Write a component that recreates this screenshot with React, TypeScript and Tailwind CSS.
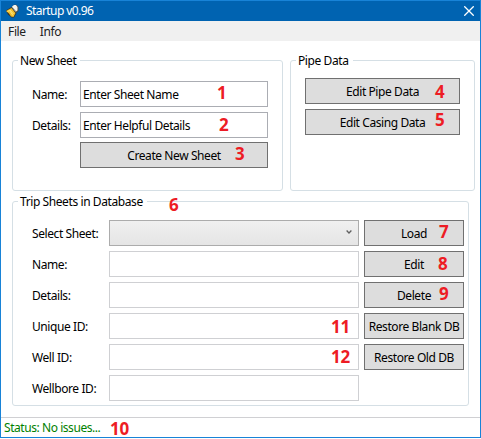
import type { ReactNode } from 'react';

function Mark({ n, className }: { n: number; className: string }) {
  return (
    <span className={`pointer-events-none absolute z-10 text-[17px] leading-[18px] font-bold tracking-[-0.2px] text-[#ed1c24] ${className}`}>
      {n}
    </span>
  );
}

function Group({ title, className, children }: { title: string; className: string; children: ReactNode }) {
  return (
    <section className={`rounded-[3px] border border-[#d5dfe5] ${className}`}>
      <h2 className="-mt-[8px] ml-[5px] h-4 w-fit bg-white pr-[4px] pl-[2px] leading-4">{title}</h2>
      {children}
    </section>
  );
}

function Button({ children, className }: { children: ReactNode; className: string }) {
  return (
    <button className={`flex h-[26px] shrink-0 items-center justify-center border border-[#707070] bg-[#dddddd] pt-[2px] whitespace-nowrap ${className}`}>
      {children}
    </button>
  );
}

function NewSheetField({ label, value }: { label: string; value: string }) {
  return (
    <div className="flex h-[26px] items-center">
      <label className="w-12 pt-[2px]">{label}</label>
      <div className="flex h-[26px] w-[188px] items-center border border-[#abadb3] pt-[2px] pl-[2px]">{value}</div>
    </div>
  );
}

const rows = [
  { label: 'Select Sheet:', action: 'Load', combo: true },
  { label: 'Name:', action: 'Edit' },
  { label: 'Details:', action: 'Delete' },
  { label: 'Unique ID:', action: 'Restore Blank DB' },
  { label: 'Well ID:', action: 'Restore Old DB' },
  { label: 'Wellbore ID:' },
];

export default function App() {
  return (
    <div className="relative h-[439px] w-[481px] bg-white font-['Noto_Sans','Open_Sans',sans-serif] text-[12px] leading-4 tracking-[-0.41px] text-black">
      <div className="flex h-[438px] flex-col border border-[#1883d7]">
        <header className="flex h-5 shrink-0 items-center bg-[#0063b1] pr-[6px] pl-[4px] text-white">
          <svg width="15" height="15" viewBox="0 0 15 15">
            <path d="M1 6.5L6.5 3l5 6-2.500 4.500H6.500L3 10.500z" fill="#3a3526" />
            <path d="M7 2.500L9 .8h2.500L13.500 3v4L11 9z" fill="#4c4c48" />
            <path d="M1 7l5.500-3L10.500 9l-2 4-2.500-.5-2-3z" fill="#efbd2c" />
            <path d="M2.500 7.500l2-1 3.500 5M5 6l3.500 4" fill="none" stroke="#fff08a" strokeWidth=".8" />
            <path d="M7 2.500L9 1h2l1.500 2v3.500L10.500 7.500z" fill="#f4f4ee" />
            <path d="M7 3l4 4.500" fill="none" stroke="#aaa99f" strokeWidth="1" />
          </svg>
          <h1 className="ml-[6px] flex-1 tracking-[-0.58px]">Startup v0.96</h1>
          <svg width="10" height="10" viewBox="0 0 10 10" fill="none" stroke="white" strokeWidth="1.3">
            <path d="M.3.3l9.400 9.400M9.700.3L.3 9.700" />
          </svg>
        </header>
        <nav className="flex h-5 shrink-0 items-center gap-[14px] bg-[#f0f0f0] pt-px pl-[7px] tracking-[-0.35px] text-[#212121]">
          <span>File</span>
          <span>Info</span>
        </nav>
        <main className="flex flex-1 flex-col gap-[10px] pt-[19px] pl-[11px]">
          <div className="flex gap-[7px]">
            <Group title="New Sheet" className="h-[131px] w-[271px]">
              <div className="mt-[12px] ml-[19px] flex flex-col gap-[5px]">
                <NewSheetField label="Name:" value="Enter Sheet Name" />
                <NewSheetField label="Details:" value="Enter Helpful Details" />
                <Button className="-mt-px ml-12 w-[188px]">Create New Sheet</Button>
              </div>
            </Group>
            <Group title="Pipe Data" className="h-[131px] w-[185px]">
              <div className="mt-[9px] ml-[14px] flex flex-col gap-[5px]">
                <Button className="w-[155px]">Edit Pipe Data</Button>
                <Button className="w-[155px]">Edit Casing Data</Button>
              </div>
            </Group>
          </div>
          <Group title="Trip Sheets in Database" className="h-[205px] w-[457px]">
            <div className="mt-[10px] ml-[19px] flex flex-col gap-[5px]">
              {rows.map((row) => (
                <div key={row.label} className="flex h-[26px] items-center">
                  <label className="w-[77px] pt-[2px] whitespace-nowrap">{row.label}</label>
                  {row.combo ? (
                    <div className="flex h-[26px] w-[250px] items-center justify-end border border-[#acacac] bg-linear-to-b from-[#f0f0f0] to-[#e5e5e5] pr-[6px] pb-[2px]">
                      <svg width="6" height="4" viewBox="0 0 6 4" fill="none" stroke="#606060" strokeWidth="1.3">
                        <path d="M.6.5L3 3 5.400.5" />
                      </svg>
                    </div>
                  ) : (
                    <div className="h-[26px] w-[250px] border border-[#cfd0d3]" />
                  )}
                  {row.action && <Button className="ml-[5px] w-[100px]">{row.action}</Button>}
                </div>
              ))}
            </div>
          </Group>
        </main>
        <footer className="h-5 shrink-0 border-t border-[#d0d0d3] pt-[2px] pl-[3px] tracking-[-0.44px] text-[#008000]">Status: No issues...</footer>
      </div>
      <Mark n={1} className="top-[84px] left-[217px]" />
      <Mark n={2} className="top-[116px] left-[219px]" />
      <Mark n={3} className="top-[145px] left-[235px]" />
      <Mark n={4} className="top-[83px] left-[435px]" />
      <Mark n={5} className="top-[111px] left-[435px]" />
      <Mark n={6} className="top-[196px] left-[169px]" />
      <Mark n={7} className="top-[223px] left-[439px]" />
      <Mark n={8} className="top-[255px] left-[438px]" />
      <Mark n={9} className="top-[285px] left-[439px]" />
      <Mark n={10} className="top-[420px] left-[110px]" />
      <Mark n={11} className="top-[318px] left-[331px]" />
      <Mark n={12} className="top-[348px] left-[331px]" />
    </div>
  );
}
